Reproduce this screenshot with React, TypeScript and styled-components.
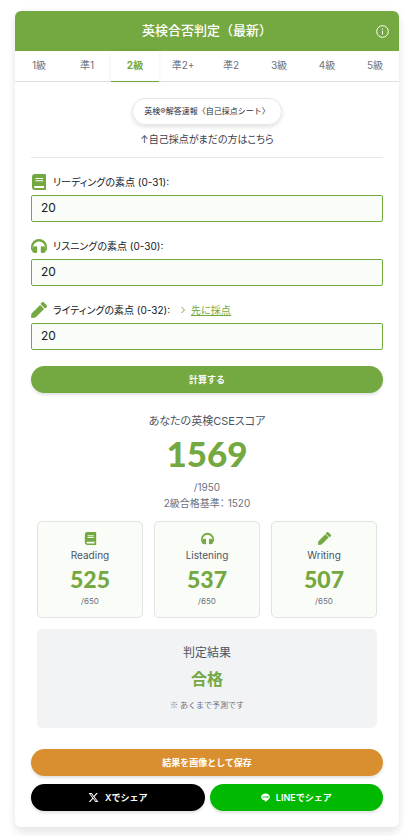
import React, { useState } from "react";
import styled, { createGlobalStyle, css } from "styled-components";
import { FaXTwitter } from "react-icons/fa6";

const green = "#74a840";

const GlobalStyle = createGlobalStyle`
  *, *::before, *::after { box-sizing: border-box; }
  body {
    margin: 0;
    background: #fff;
    color: #111827;
    font-family: Inter, "Noto Sans CJK JP", sans-serif;
    font-feature-settings: "palt";
    font-size: 10px;
    line-height: 16px;
  }
  button, input { font: inherit; font-feature-settings: inherit; color: inherit; margin: 0; }
  button { cursor: pointer; border: 0; }
  h1, h2, p { margin: 0; font-weight: 400; }
`;

const Card = styled.main`
  margin: 11px 14px 10px 15px;
  background: #fff;
  border-radius: 6px;
  box-shadow: 0 6px 10px rgba(0, 0, 0, 0.09), 0 0 10px rgba(0, 0, 0, 0.03);
`;

const Header = styled.header`
  display: grid;
  grid-template-columns: 1fr auto 1fr;
  align-items: center;
  height: 40px;
  padding: 0 10px;
  color: #fff;
  background: ${green};
  border-radius: 6px 6px 0 0;
`;

const Title = styled.h1`
  grid-column: 2;
  font-size: 13px;
  font-weight: 500;
  font-feature-settings: normal;
  line-height: 18px;
  padding-bottom: 2px;
`;

const InfoButton = styled.button`
  display: flex;
  justify-self: end;
  padding: 0;
  background: none;
`;

const Tabs = styled.nav`
  display: grid;
  grid-template-columns: repeat(8, 1fr);
  height: 31px;
  border-bottom: 1px solid #d9e2e6;
`;

const Tab = styled.button<{ $active: boolean }>`
  height: 31px;
  padding: 0 0 2px;
  background: none;
  color: #6b7280;
  border-bottom: 1px solid transparent;
  ${({ $active }) =>
    $active &&
    css`
      color: ${green};
      font-weight: 700;
      border-color: ${green};
      box-shadow: 0 0 4px rgba(0, 0, 0, 0.07);
    `}
`;

const Body = styled.div`
  padding: 16px;
`;

const Intro = styled.section`
  display: flex;
  flex-direction: column;
  align-items: center;
  gap: 6px;
  padding-bottom: 10px;
  border-bottom: 1px solid #e5e7eb;
  color: #374151;
`;

const SheetLink = styled.a`
  height: 27px;
  padding: 0 11px;
  border: 1px solid #e3e5e8;
  border-radius: 14px;
  box-shadow: 0 2px 4px rgba(0, 0, 0, 0.12);
  color: #1f2937;
  font-size: 8px;
  font-feature-settings: normal;
  line-height: 24px;
  text-decoration: none;
`;

const Form = styled.form`
  display: flex;
  flex-direction: column;
  gap: 16px;
  padding-top: 16px;
`;

const Field = styled.div`
  display: flex;
  flex-direction: column;
  gap: 5px;
`;

const LabelRow = styled.div`
  display: flex;
  align-items: center;
  gap: 10px;
`;

const Label = styled.label`
  display: flex;
  align-items: center;
  gap: 6px;
  svg { color: ${green}; }
`;

const ScoreLink = styled.a`
  display: flex;
  align-items: center;
  gap: 5px;
  color: ${green};
  span { text-decoration: underline; }
`;

const ScoreInput = styled.input`
  width: 100%;
  height: 27px;
  padding: 0 9px 2px;
  border: 1px solid ${green};
  border-radius: 2px;
  outline: 0;
  background: #f9fcf7;
  font-size: 12px;
`;

const PillButton = styled.button<{ $color: string }>`
  display: flex;
  align-items: center;
  justify-content: center;
  gap: 6px;
  width: 100%;
  height: 27px;
  padding: 0;
  border-radius: 14px;
  background: ${({ $color }) => $color};
  box-shadow: 0 2px 3px rgba(0, 0, 0, 0.12);
  color: #fff;
  font-size: 9px;
  font-weight: 700;
  font-feature-settings: normal;
`;

const ShareButton = styled(PillButton)`
  font-weight: 600;
`;

const Result = styled.section`
  display: flex;
  flex-direction: column;
  align-items: center;
  padding: 20px 6px 0;
  color: #4b5563;
`;

const ResultTitle = styled.h2`
  font-size: 11px;
  line-height: 16px;
`;

const Total = styled.p`
  margin-bottom: 2px;
  color: ${green};
  font-family: Lato, sans-serif;
  font-size: 35px;
  font-weight: 900;
  line-height: 48px;
`;

const Note = styled.p`
  color: #6b7280;
`;

const Skills = styled.div`
  display: grid;
  grid-template-columns: repeat(3, 1fr);
  gap: 11px;
  width: 100%;
  margin-top: 10px;
`;

const SkillCard = styled.article`
  display: flex;
  flex-direction: column;
  align-items: center;
  height: 97px;
  padding-top: 10px;
  border: 1px solid #dfe5e0;
  border-radius: 5px;
  background: #f9fcf7;
  > svg { color: ${green}; }
`;

const SkillName = styled.h2`
  margin-top: 2px;
  font-size: 10px;
  line-height: 16px;
`;

const SkillScore = styled.p`
  color: ${green};
  font-family: Lato, sans-serif;
  font-size: 23px;
  font-weight: 900;
  line-height: 32px;
`;

const Small = styled.p`
  color: #6b7280;
  font-size: 8px;
  line-height: 12px;
`;

const Verdict = styled.section`
  display: flex;
  flex-direction: column;
  align-items: center;
  width: 100%;
  height: 99px;
  margin-top: 11px;
  padding-top: 14px;
  border-radius: 5px;
  background: #f1f3f5;
`;

const VerdictTitle = styled.h2`
  font-size: 12px;
  line-height: 20px;
`;

const VerdictText = styled.p`
  margin-bottom: 4px;
  color: ${green};
  font-size: 16px;
  font-weight: 700;
  line-height: 32px;
`;

const VerdictNote = styled(Small)`
  font-family: "Noto Sans CJK JP", sans-serif;
  font-feature-settings: normal;
`;

const Actions = styled.div`
  display: flex;
  flex-direction: column;
  gap: 8px;
  padding-top: 21px;
`;

const ShareRow = styled.div`
  display: grid;
  grid-template-columns: 1fr 1fr;
  gap: 5px;
`;

function InfoIcon() {
  return (
    <svg width="13" height="13" viewBox="0 0 13 13" fill="none" stroke="currentColor">
      <circle cx="6.5" cy="6.5" r="5.8" />
      <path d="M6.5 5.7v3.7" />
      <path d="M6.5 3.4v1.2" />
    </svg>
  );
}

type IconProps = { size: number };

function BookIcon({ size }: IconProps) {
  return (
    <svg width={size} height={size} viewBox="0 0 16 16">
      <path fill="currentColor" fillRule="evenodd" d="M4 0h10.300c.5 0 .7.300.7.700v14.600c0 .4-.3.700-.7.700H4a3 3 0 0 1-3-3V3a3 3 0 0 1 3-3zM4.500 4v1.100h7.500V4zM4.500 6.200v1.100h7.500V6.200zM4 12a1 1 0 0 0 0 2h9v-2z" />
    </svg>
  );
}

function HeadphonesIcon({ size }: IconProps) {
  return (
    <svg width={size} height={size} viewBox="0 0 16 16" fill="currentColor">
      <path d="M8 1a8 8 0 0 0-8 8v2c0 .7.4 1.300 1 1.600V9.500h1A6 6 0 0 1 14 9.500h1v3.100c.6-.3 1-.9 1-1.600V9a8 8 0 0 0-8-8z" />
      <path d="M4.500 8.300h.8c.5 0 .9.400.9.900v4.900c0 .5-.4.900-.9.900h-.8A3.300 3.300 0 0 1 1 11.700a3.400 3.400 0 0 1 3.500-3.400zM11.500 8.300h-.8c-.5 0-.9.400-.9.900v4.900c0 .5.4.900.9.900h.8a3.300 3.300 0 0 0 3.500-3.300 3.400 3.400 0 0 0-3.500-3.400z" />
    </svg>
  );
}

function PencilIcon({ size }: IconProps) {
  return (
    <svg width={size} height={size} viewBox="0 0 16 16" fill="currentColor">
      <path d="M9.100 2.900l4 4-8.600 8.600-3.700.5C.3 16.100-.1 15.400.1 14.500l.4-3z" />
      <path d="M15.500 3c.7.700.7 1.700 0 2.400L14 6.500l-4.500-4.500L10.600.5c.7-.7 1.700-.7 2.400 0z" />
    </svg>
  );
}

function Chevron() {
  return (
    <svg width="6" height="8" viewBox="0 0 6 8" fill="none" stroke="currentColor">
      <path d="M1.5 1l3 3-3 3" />
    </svg>
  );
}

function BubbleIcon() {
  return (
    <svg width="9" height="9" viewBox="0 0 18 18">
      <path fill="#fff" d="M9 1C4.2 1 .3 4 .3 8c0 3.400 3 6.200 7 6.900 1 .2.900.600.700 2.100 0 .6.300.7 1 .300 2.500-1.400 8.700-5 8.700-9.300C17.700 4 13.800 1 9 1z" />
      <path d="M4 6v4h2M7.500 6v4M9.500 10V6l2.500 4V6M15 6h-1.500v4H15M13.500 8H15" fill="none" stroke="#00b900" strokeWidth=".9" />
    </svg>
  );
}

const grades = ["1級", "準1", "2級", "準2+", "準2", "3級", "4級", "5級"];

const fields = [
  { id: "reading", label: "リーディングの素点 (0-31):", Icon: BookIcon },
  { id: "listening", label: "リスニングの素点 (0-30):", Icon: HeadphonesIcon },
  { id: "writing", label: "ライティングの素点 (0-32):", Icon: PencilIcon, link: "先に採点" },
];

const skills = [
  { name: "Reading", score: 525, Icon: BookIcon },
  { name: "Listening", score: 537, Icon: HeadphonesIcon },
  { name: "Writing", score: 507, Icon: PencilIcon },
];

export default function App() {
  const [grade, setGrade] = useState("2級");

  return (
    <>
      <GlobalStyle />
      <Card>
        <Header>
          <Title>英検合否判定（最新）</Title>
          <InfoButton type="button" aria-label="情報"><InfoIcon /></InfoButton>
        </Header>
        <Tabs>
          {grades.map((name) => (
            <Tab key={name} type="button" $active={name === grade} onClick={() => setGrade(name)}>
              {name}
            </Tab>
          ))}
        </Tabs>
        <Body>
          <Intro>
            <SheetLink href="#sheet">英検®解答速報〈自己採点シート〉</SheetLink>
            <p>↑自己採点がまだの方はこちら</p>
          </Intro>
          <Form onSubmit={(event) => event.preventDefault()}>
            {fields.map(({ id, label, Icon, link }) => (
              <Field key={id}>
                <LabelRow>
                  <Label htmlFor={id}><Icon size={16} />{label}</Label>
                  {link && <ScoreLink href="#writing-score"><Chevron /><span>{link}</span></ScoreLink>}
                </LabelRow>
                <ScoreInput id={id} inputMode="numeric" defaultValue="20" />
              </Field>
            ))}
            <PillButton type="submit" $color={green}>計算する</PillButton>
          </Form>
          <Result>
            <ResultTitle>あなたの英検CSEスコア</ResultTitle>
            <Total>1569</Total>
            <Note>/1950</Note>
            <Note>2級合格基準： 1520</Note>
            <Skills>
              {skills.map(({ name, score, Icon }) => (
                <SkillCard key={name}>
                  <Icon size={13} />
                  <SkillName>{name}</SkillName>
                  <SkillScore>{score}</SkillScore>
                  <Small>/650</Small>
                </SkillCard>
              ))}
            </Skills>
            <Verdict>
              <VerdictTitle>判定結果</VerdictTitle>
              <VerdictText>合格</VerdictText>
              <VerdictNote>※ あくまで予測です</VerdictNote>
            </Verdict>
          </Result>
          <Actions>
            <PillButton type="button" $color="#d98f2f">結果を画像として保存</PillButton>
            <ShareRow>
              <ShareButton type="button" $color="#000"><FaXTwitter size={11} />Xでシェア</ShareButton>
              <ShareButton type="button" $color="#00b900"><BubbleIcon />LINEでシェア</ShareButton>
            </ShareRow>
          </Actions>
        </Body>
      </Card>
    </>
  );
}
